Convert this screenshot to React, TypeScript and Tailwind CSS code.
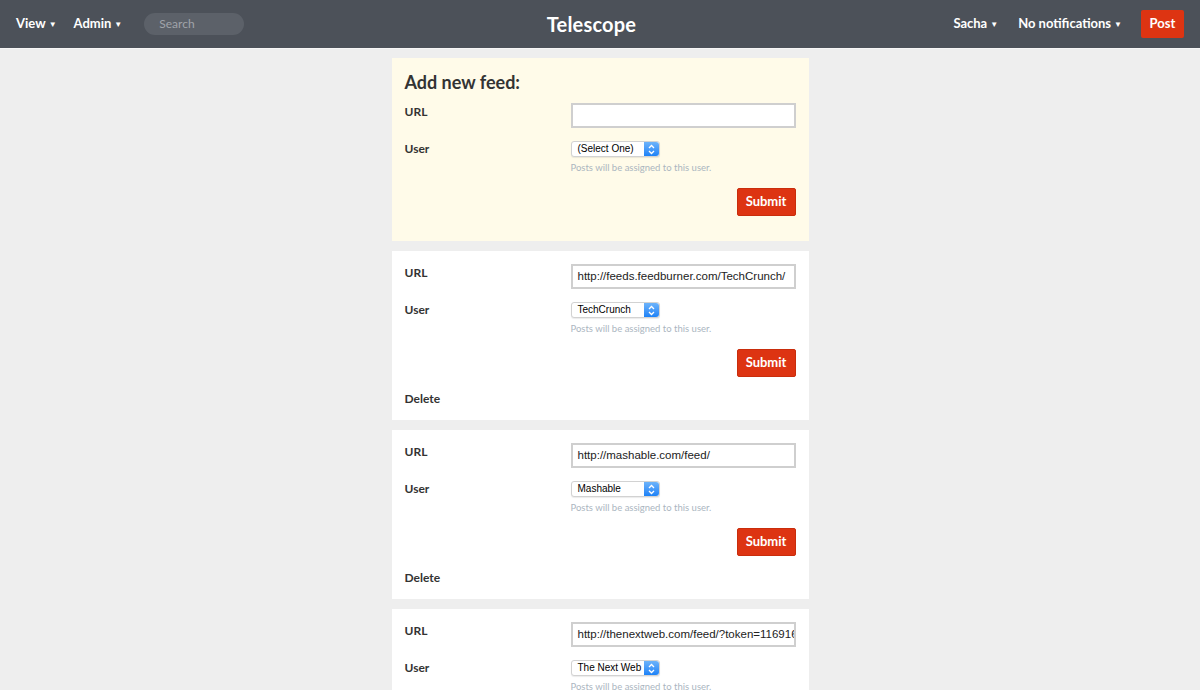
const feeds = [
  { url: "http://feeds.feedburner.com/TechCrunch/", user: "TechCrunch" },
  { url: "http://mashable.com/feed/", user: "Mashable" },
  { url: "http://thenextweb.com/feed/?token=1169165", user: "The Next Web" },
];

const sans = "font-['Lato','Open_Sans',sans-serif]";
const sys = "font-['Liberation_Sans','Helvetica',Arial,sans-serif]";

function Caret() {
  return <span className="ml-[3px] text-[8px] relative top-[-1px]">▼</span>;
}

function FakeSelect({ value }: { value: string }) {
  return (
    <div className="flex h-[16px] w-[89px] items-stretch rounded-[3px] border border-[#d2d2d2] bg-white shadow-[0_1px_1px_rgba(0,0,0,0.08)]">
      <span className={`${sys} flex-1 pl-[6px] text-[10px] leading-[14px] text-black`}>{value}</span>
      <span className="flex w-[15px] flex-col items-center justify-center rounded-r-[3px] bg-gradient-to-b from-[#6cb3fa] to-[#1a82f7]">
        <svg width="7" height="11" viewBox="0 0 7 11" fill="none" stroke="white" strokeWidth="1.3">
          <path d="M1 4 L3.5 1.5 L6 4" />
          <path d="M1 7 L3.5 9.5 L6 7" />
        </svg>
      </span>
    </div>
  );
}

function FeedForm({
  url,
  user,
  heading,
  showDelete,
}: {
  url: string;
  user: string;
  heading?: boolean;
  showDelete?: boolean;
}) {
  return (
    <div
      className={`${heading ? "bg-[#fffbe9] pb-[25px]" : "bg-white pb-[12px]"} px-[13px] pt-[13px] text-[#333]`}
    >
      {heading && (
        <h2 className={`${sans} mb-[10px] text-[18px] font-bold leading-[22px]`}>Add new feed:</h2>
      )}
      <div className="grid grid-cols-[166px_1fr]">
        <label className={`${sans} text-[12px] font-bold leading-[18px]`}>URL</label>
        <div
          className={`${sys} h-[25px] overflow-hidden whitespace-nowrap border-2 border-[#cfcfcf] bg-white pl-[5px] pt-[3px] text-[11.5px] leading-[15px] text-[#222]`}
        >
          {url}
        </div>
      </div>
      <div className="mt-[12px] grid grid-cols-[166px_1fr]">
        <label className={`${sans} text-[12px] font-bold leading-[18px]`}>User</label>
        <div>
          <div className="flex h-[18px] items-center">
            <FakeSelect value={user} />
          </div>
          <p className={`${sans} mt-[3px] text-[9.5px] leading-[13px] text-[#abb6bf]`}>
            Posts will be assigned to this user.
          </p>
        </div>
      </div>
      <div className="mt-[14px] flex justify-end">
        <button
          className={`${sans} h-[28px] w-[59px] rounded-[2px] border border-[#c92d0c] bg-[#dd3412] text-[13px] font-bold text-white`}
        >
          Submit
        </button>
      </div>
      {showDelete && (
        <div className={`${sans} mt-[13px] text-[12px] font-bold leading-[18px]`}>Delete</div>
      )}
    </div>
  );
}

export default function App() {
  return (
    <div className="min-h-[690px] bg-[#eeeeee]">
      <header
        className={`${sans} flex h-[49px] items-center border-b border-[#f6f6f6] bg-[#4c5159] px-[16px] text-white`}
      >
        <div className="flex flex-1 items-center">
          <span className="text-[13px] font-bold">
            View
            <Caret />
          </span>
          <span className="ml-[17px] text-[13px] font-bold">
            Admin
            <Caret />
          </span>
          <div className="ml-[22px] flex h-[22px] w-[100px] items-center rounded-full bg-[#5c6169] pl-[15px] text-[12px] text-[#a0a4aa]">
            Search
          </div>
        </div>
        <h1 className="mr-[17px] text-[20px] font-bold tracking-[0.2px]">Telescope</h1>
        <div className="flex flex-1 items-center justify-end">
          <span className="text-[13px] font-bold">
            Sacha
            <Caret />
          </span>
          <span className="ml-[20px] text-[13px] font-bold">
            No notifications
            <Caret />
          </span>
          <button className="ml-[19px] h-[28px] w-[43px] rounded-[2px] bg-[#dd3412] text-[13px] font-bold text-white">
            Post
          </button>
        </div>
      </header>
      <main className="mx-auto mt-[9px] flex w-[417px] flex-col gap-[10px] pb-[20px]">
        <FeedForm url="" user="(Select One)" heading />
        {feeds.map((f) => (
          <FeedForm key={f.user} url={f.url} user={f.user} showDelete />
        ))}
      </main>
    </div>
  );
}
